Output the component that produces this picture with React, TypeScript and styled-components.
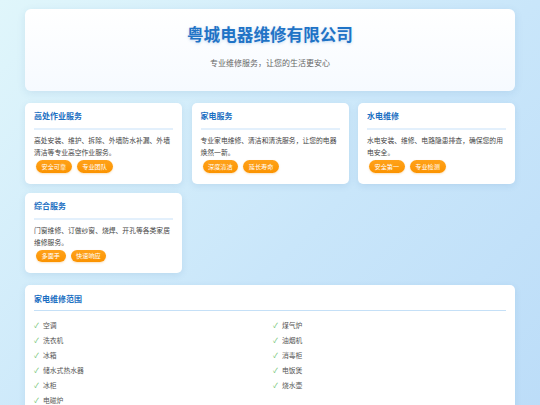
import React from 'react';
import styled, { createGlobalStyle } from 'styled-components';

const GlobalStyle = createGlobalStyle`
    html, body {
        margin: 0;
        padding: 0;
    }
    body {
        min-height: 405px;
        background: linear-gradient(135deg, #e0f6fb 0%, #c9e6fa 55%, #bbdcf8 100%);
        font-family: "Noto Sans CJK SC", "Noto Sans", sans-serif;
        color: #444;
    }
`;

const Page = styled.div({
    width: 490,
    margin: '0 auto',
    padding: '9px 0 20px',
    display: 'flex',
    flexDirection: 'column',
    gap: 12
});

const Header = styled.header({
    height: 82,
    boxSizing: 'border-box',
    background: 'linear-gradient(180deg, #ffffff 0%, #f6faff 100%)',
    borderRadius: 6,
    boxShadow: '0 2px 8px rgba(30, 90, 150, 0.10)',
    display: 'flex',
    flexDirection: 'column',
    alignItems: 'center',
    paddingTop: 14
});

const Title = styled.h1({
    margin: 0,
    fontSize: 16.6,
    lineHeight: '22px',
    fontWeight: 700,
    color: '#1f73c6',
    textShadow: '0 1px 3px rgba(31, 115, 198, 0.25)',
    letterSpacing: 0
});

const Subtitle = styled.p({
    margin: '12px 0 0',
    fontSize: 8,
    lineHeight: '12px',
    color: '#666'
});

const ServiceGrid = styled.div({
    display: 'grid',
    gridTemplateColumns: 'repeat(3, 157px)',
    columnGap: 9.5,
    rowGap: 9
});

const Card = styled.section({
    background: '#fff',
    borderRadius: 5,
    boxShadow: '0 2px 7px rgba(30, 90, 150, 0.10)',
    padding: '7px 9px 11px',
    boxSizing: 'border-box'
});

const CardTitle = styled.h3({
    margin: 0,
    fontSize: 8,
    lineHeight: '12px',
    fontWeight: 700,
    color: '#1b6fc2',
    paddingBottom: 6,
    borderBottom: '2px solid #e3f0fc'
});

const CardText = styled.p({
    margin: '4px 0 0',
    fontSize: 6.8,
    lineHeight: '12px',
    color: '#444'
});

const Tags = styled.div({
    display: 'flex',
    gap: 5,
    paddingLeft: 2,
    marginTop: 2
});

const Tag = styled.span({
    display: 'inline-flex',
    alignItems: 'center',
    height: 12.5,
    padding: '0 5.5px',
    borderRadius: 7,
    background: 'linear-gradient(180deg, #ffa21a 0%, #fb9300 100%)',
    color: '#fff',
    fontSize: 6.2,
    boxShadow: '0 1px 2px rgba(240, 140, 0, 0.25)'
});

const RangeTitle = styled.h3({
    margin: 0,
    fontSize: 8,
    lineHeight: '12px',
    fontWeight: 700,
    color: '#1b6fc2',
    paddingBottom: 5,
    borderBottom: '1px solid #c5e0f7'
});

const RangeCard = styled(Card)({
    padding: '8px 9px 10px'
});

const RangeColumns = styled.div({
    display: 'grid',
    gridTemplateColumns: '1fr 1fr',
    columnGap: 6,
    marginTop: 6
});

const RangeList = styled.ul({
    listStyle: 'none',
    margin: 0,
    padding: 0
});

const RangeItem = styled.li({
    display: 'flex',
    alignItems: 'center',
    height: 15,
    fontSize: 6.8,
    color: '#555',
    gap: 3,
    '&::before': {
        content: '"✓"',
        color: '#6cbf6c',
        fontSize: 7,
        width: 6
    }
});

const services = [
    {
        title: '高处作业服务',
        text: '高处安装、维护、拆除、外墙防水补漏、外墙清洁等专业高空作业服务。',
        tags: ['安全可靠', '专业团队']
    },
    {
        title: '家电服务',
        text: '专业家电维修、清洁和清洗服务，让您的电器焕然一新。',
        tags: ['深度清洁', '延长寿命']
    },
    {
        title: '水电维修',
        text: '水电安装、维修、电路隐患排查，确保您的用电安全。',
        tags: ['安全第一', '专业检测']
    },
    {
        title: '综合服务',
        text: '门窗维修、订做纱窗、烧焊、开孔等各类家居维修服务。',
        tags: ['多面手', '快速响应']
    }
];

const leftItems = ['空调', '洗衣机', '冰箱', '储水式热水器', '冰柜', '电磁炉'];
const rightItems = ['煤气炉', '油烟机', '消毒柜', '电饭煲', '烧水壶'];

export default function App() {
    return (
        <>
            <GlobalStyle />
            <Page>
                <Header>
                    <Title>粤城电器维修有限公司</Title>
                    <Subtitle>专业维修服务，让您的生活更安心</Subtitle>
                </Header>
                <ServiceGrid>
                    {services.map((s) => (
                        <Card key={s.title}>
                            <CardTitle>{s.title}</CardTitle>
                            <CardText>{s.text}</CardText>
                            <Tags>
                                {s.tags.map((t) => (
                                    <Tag key={t}>{t}</Tag>
                                ))}
                            </Tags>
                        </Card>
                    ))}
                </ServiceGrid>
                <RangeCard>
                    <RangeTitle>家电维修范围</RangeTitle>
                    <RangeColumns>
                        <RangeList>
                            {leftItems.map((i) => (
                                <RangeItem key={i}>{i}</RangeItem>
                            ))}
                        </RangeList>
                        <RangeList>
                            {rightItems.map((i) => (
                                <RangeItem key={i}>{i}</RangeItem>
                            ))}
                        </RangeList>
                    </RangeColumns>
                </RangeCard>
            </Page>
        </>
    );
}
